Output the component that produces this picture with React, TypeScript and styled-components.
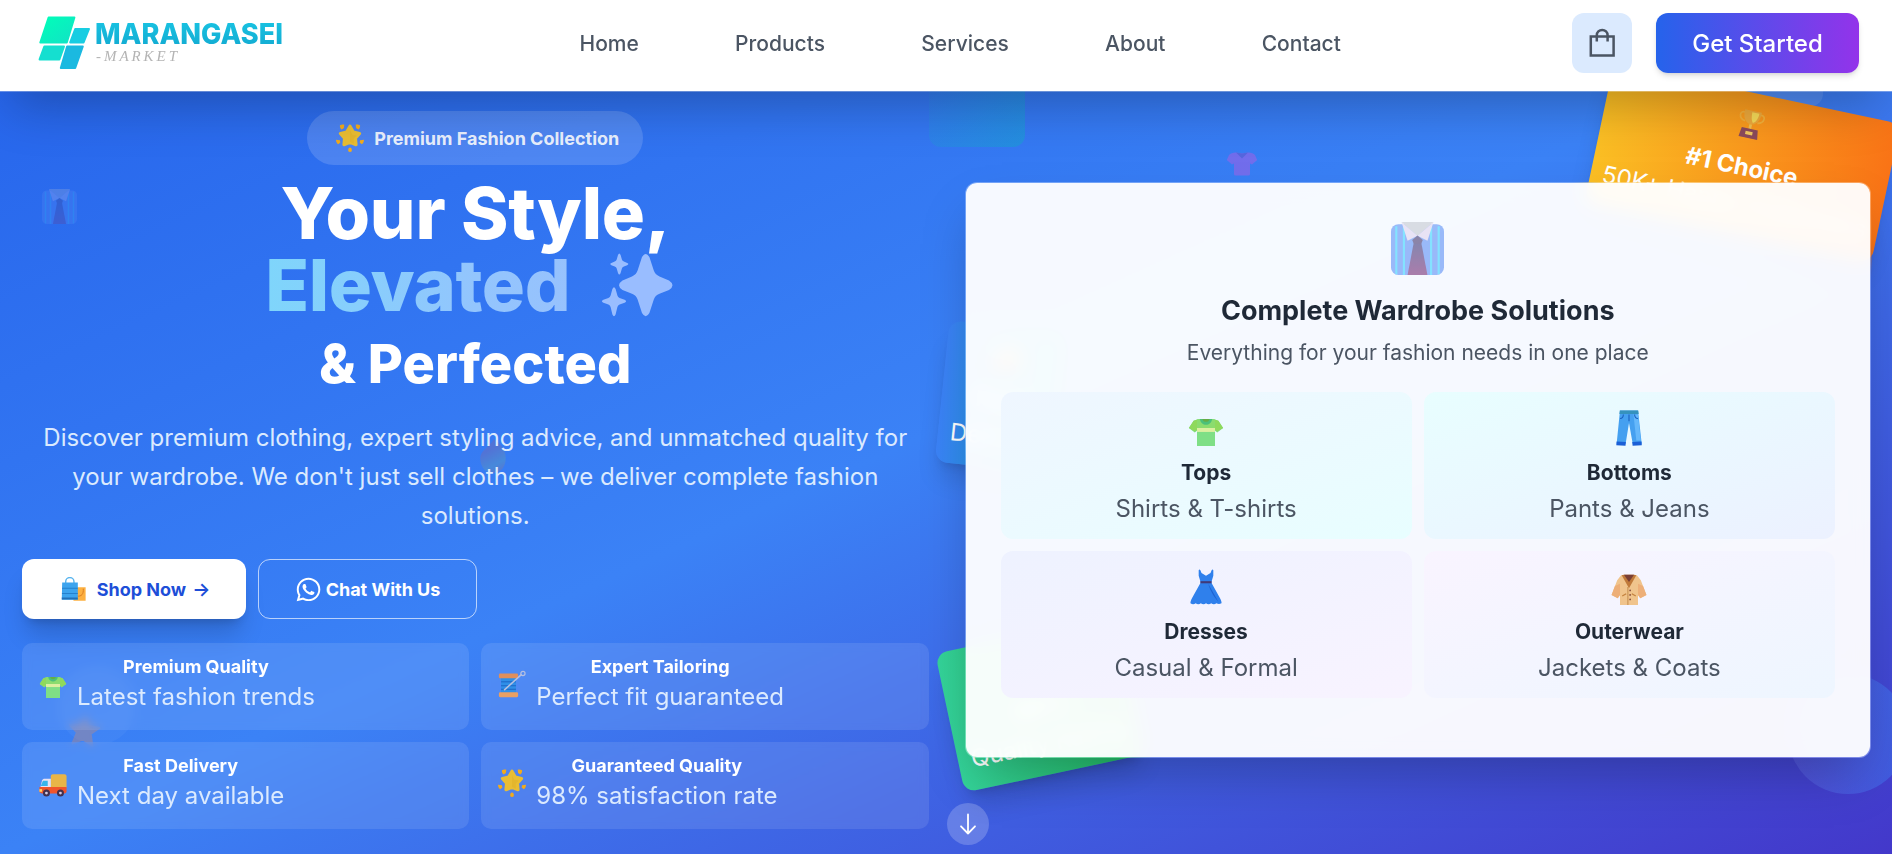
import React from 'react';
import styled, { createGlobalStyle, css } from 'styled-components';
import { FaWhatsapp } from 'react-icons/fa';

const GlobalStyle = createGlobalStyle`
  *, *::before, *::after { box-sizing: border-box; }
  body { margin: 0; overflow: hidden; }
  h1, h2, h3, h4, p { margin: 0; }
  button { font-family: inherit; border: 0; cursor: pointer; }
`;

/* ---------- page shell ---------- */

const Page = styled.div`
  position: relative;
  width: 100%;
  height: 854px;
  overflow: hidden;
  font-family: Inter, 'Liberation Sans', sans-serif;
  background: linear-gradient(to bottom right, #2563eb, #3b82f6, #4338ca);
`;

const Header = styled.header`
  position: relative;
  z-index: 5;
  height: 92px;
  padding: 13px 33px 0 38px;
  display: grid;
  grid-template-columns: 541.5px auto 1fr;
  align-items: start;
  background: #fff;
  background-clip: padding-box;
  border-bottom: 1px solid rgba(255, 255, 255, 0.3);
  box-shadow: 0 25px 50px -12px rgba(0, 0, 0, 0.25);
`;

const Nav = styled.nav`
  display: flex;
  align-items: center;
  gap: 96.3px;
  height: 60px;
`;

const NavLink = styled.a`
  font-size: 21px;
  font-weight: 500;
  color: #4b5563;
`;

const Actions = styled.div`
  display: flex;
  justify-content: flex-end;
  gap: 24px;
`;

const BagButton = styled.button`
  width: 60px;
  height: 60px;
  padding: 0;
  border-radius: 12px;
  background: #dbeafe;
  display: grid;
  place-items: center;
`;

const StartButton = styled.button`
  width: 203px;
  height: 60px;
  padding: 0;
  border-radius: 12px;
  color: #fff;
  font-size: 24px;
  font-weight: 500;
  background: linear-gradient(to right, #2563eb, #9333ea);
  box-shadow: 0 4px 6px -1px rgba(0, 0, 0, 0.12), 0 2px 4px -2px rgba(0, 0, 0, 0.12);
`;

/* ---------- hero, left column ---------- */

const Hero = styled.main`
  position: relative;
  z-index: 2;
  padding: 19px 21px 0 22px;
  display: grid;
  grid-template-columns: 1fr 1fr;
  gap: 36px;
  align-items: start;
`;

const Intro = styled.section`
  display: flex;
  flex-direction: column;
`;

const Badge = styled.div`
  align-self: center;
  width: 336px;
  height: 54px;
  padding-left: 29px;
  display: flex;
  align-items: center;
  gap: 10px;
  border-radius: 27px;
  background: rgba(255, 255, 255, 0.15);
  color: rgba(255, 255, 255, 0.9);
  font-size: 18px;
  font-weight: 700;
  white-space: nowrap;
`;

const Headline = styled.h1`
  margin-top: 12px;
  color: #fff;
  text-align: center;
  font-size: 72px;
  line-height: 72px;
  font-weight: 800;
  letter-spacing: -0.2px;
`;

const Accent = styled.span`
  display: flex;
  justify-content: center;
  align-items: center;
  height: 72px;
  padding-right: 12px;
  gap: 32px;
  letter-spacing: -0.4px;
  color: transparent;
  background: linear-gradient(to right, #67e8f9, #93c5fd, #a5b4fc);
  background-clip: text;
  -webkit-background-clip: text;
`;

const SubHeadline = styled.span`
  display: block;
  margin-top: 13px;
  font-size: 54px;
  line-height: 60px;
  letter-spacing: 0;
`;

const Lead = styled.p`
  margin: 24px 0;
  padding: 0 20px;
  color: #dbeafe;
  text-align: center;
  font-size: 24px;
  line-height: 39px;
`;

const Buttons = styled.div`
  display: flex;
  gap: 12px;
`;

const CtaButton = styled.button<{ $solid?: boolean }>`
  height: 60px;
  padding: 0;
  display: flex;
  align-items: center;
  justify-content: center;
  border-radius: 12px;
  font-size: 18px;
  font-weight: 700;
  ${({ $solid }) =>
    $solid
      ? css`
          width: 224px;
          padding-left: 3px;
          gap: 6px;
          color: #1d4ed8;
          background: #fff;
          box-shadow: 0 20px 25px -5px rgba(0, 0, 0, 0.16), 0 8px 10px -6px rgba(0, 0, 0, 0.16);
        `
      : css`
          width: 219px;
          gap: 4px;
          color: #fff;
          background: transparent;
          border: 1px solid rgba(255, 255, 255, 0.65);
        `}
`;

const ButtonLabel = styled.span`
  margin-left: 5px;
`;

const ButtonArrow = styled.span`
  font-size: 19px;
  font-weight: 600;
`;

const Features = styled.div`
  margin-top: 24px;
  display: grid;
  grid-template-columns: 1fr 1fr;
  gap: 12px;
`;

const Feature = styled.div`
  height: 87px;
  padding: 12px 17px;
  display: flex;
  align-items: flex-start;
  gap: 10px;
  border-radius: 10px;
  background: rgba(255, 255, 255, 0.1);
  backdrop-filter: blur(4px);
`;

const FeatureIcon = styled.span`
  height: 58px;
  display: flex;
  align-items: center;
`;

const FeatureText = styled.div`
  text-align: center;
`;

const FeatureTitle = styled.h4`
  color: #fff;
  font-size: 18px;
  line-height: 24px;
  font-weight: 700;
`;

const FeatureNote = styled.p`
  color: #dbeafe;
  font-size: 24px;
  line-height: 36px;
`;

/* ---------- hero, right column ---------- */

const Showcase = styled.section`
  height: 576px;
  margin-top: 71px;
  padding: 36px 35px 0;
  display: flex;
  flex-direction: column;
  align-items: center;
  border-radius: 12px;
  border: 1px solid rgba(255, 255, 255, 0.3);
  background: rgba(255, 255, 255, 0.955);
  background-clip: padding-box;
  backdrop-filter: blur(9px);
  box-shadow: 0 25px 50px -12px rgba(0, 0, 0, 0.25);
`;

const ShowcaseIcon = styled.div`
  height: 60px;
  padding-top: 3px;
  line-height: 0;
  opacity: 0.62;
`;

const ShowcaseTitle = styled.h2`
  margin-top: 14px;
  color: #1f2937;
  font-size: 27px;
  line-height: 36px;
  font-weight: 700;
`;

const ShowcaseNote = styled.p`
  margin: 9px 0 24px;
  color: #4b5563;
  font-size: 21px;
  line-height: 30px;
`;

const Tiles = styled.div`
  width: 100%;
  display: grid;
  grid-template-columns: 1fr 1fr;
  gap: 12px;
`;

const Tile = styled.div<{ $from: string; $to: string }>`
  height: 147px;
  padding-top: 18px;
  display: flex;
  flex-direction: column;
  align-items: center;
  border-radius: 12px;
  background: linear-gradient(to bottom right, ${(p) => p.$from}, ${(p) => p.$to});
`;

const TileTitle = styled.h3`
  margin-top: 11px;
  color: #1f2937;
  font-size: 21px;
  line-height: 32px;
  font-weight: 700;
`;

const TileNote = styled.p`
  color: #4b5563;
  font-size: 24px;
  line-height: 40px;
`;

/* ---------- floating decoration ---------- */

const Backdrop = styled.div`
  position: absolute;
  inset: 0;
  z-index: 1;
`;

const Floating = styled.div<{ $x: number; $y: number; $opacity?: number }>`
  position: absolute;
  left: ${(p) => p.$x}px;
  top: ${(p) => p.$y}px;
  opacity: ${(p) => p.$opacity ?? 1};
  line-height: 0;
`;

const Shape = styled(Floating)<{ $size: number; $radius: string; $fill: string }>`
  width: ${(p) => p.$size}px;
  height: ${(p) => p.$size}px;
  border-radius: ${(p) => p.$radius};
  background: ${(p) => p.$fill};
`;

const Sticker = styled.div<{ $x: number; $y: number; $w: number; $turn: number; $from: string; $to: string }>`
  position: absolute;
  left: ${(p) => p.$x}px;
  top: ${(p) => p.$y}px;
  width: ${(p) => p.$w}px;
  height: 142px;
  padding-top: 17px;
  display: flex;
  flex-direction: column;
  align-items: center;
  border-radius: 12px;
  color: #fff;
  white-space: nowrap;
  font-size: 24px;
  line-height: 36px;
  transform: rotate(${(p) => p.$turn}deg);
  background: linear-gradient(to right, ${(p) => p.$from}, ${(p) => p.$to});
  box-shadow: 0 20px 25px -5px rgba(0, 0, 0, 0.12), 0 8px 10px -6px rgba(0, 0, 0, 0.12);
`;

const StickerTitle = styled.strong`
  margin-top: 11px;
  font-weight: 700;
  line-height: 36px;
`;

const ScrollHint = styled.button`
  position: absolute;
  z-index: 3;
  left: 947px;
  top: 803px;
  width: 42px;
  height: 42px;
  padding: 0;
  border-radius: 50%;
  background: rgba(255, 255, 255, 0.2);
  display: grid;
  place-items: center;
`;

/* ---------- drawings ---------- */

type IconProps = { size?: number };

const Art = ({ size = 30, children }: IconProps & { children: React.ReactNode }) => (
  <svg width={size} height={size} viewBox="0 0 32 32" fill="none">
    {children}
  </svg>
);

const Logo = () => (
  <svg width="260" height="60" viewBox="38 13 260 60">
    <defs>
      <linearGradient id="lgA" x1="0" y1="0" x2="1" y2="1">
        <stop offset="0" stopColor="#00ffb8" />
        <stop offset="1" stopColor="#12e2c6" />
      </linearGradient>
      <linearGradient id="lgB" x1="0" y1="0" x2="0" y2="1">
        <stop offset="0" stopColor="#1ac6e4" />
        <stop offset="1" stopColor="#12a8d0" />
      </linearGradient>
    </defs>
    <g strokeWidth="2" strokeLinejoin="round">
      <path d="M48.6 17.5H74.4L66.8 42.5H40.3Z" fill="url(#lgA)" stroke="url(#lgA)" />
      <path d="M75.2 29H89L83.6 42.4H70.2Z" fill="#18cde2" stroke="#18cde2" />
      <path d="M44.4 46.4H64L59.4 59.4H39.6Z" fill="#15dfd0" stroke="#15dfd0" />
      <path d="M67.2 46.4H82.8L75.2 68H60.8Z" fill="#1bb9e0" stroke="#1bb9e0" />
    </g>
    <text x="95" y="43.6" textLength="188" lengthAdjust="spacingAndGlyphs" fontFamily="Inter" fontWeight="800" fontSize="28" fill="url(#lgB)">
      MARANGASEI
    </text>
    <text x="96" y="61" textLength="81" fontFamily="Liberation Serif" fontStyle="italic" fontSize="15" fill="#b4b4b4">
      -MARKET
    </text>
  </svg>
);

const Bag = () => (
  <svg width="30" height="30" viewBox="0 0 30 30" fill="none" stroke="#4b5563" strokeWidth="2.5">
    <path d="M3.8 8.500H26.600V27.500H3.800Z" />
    <path d="M9.800 13.500V7.300a5.400 5.400 0 0 1 10.800 0v6.200" />
  </svg>
);

const GlowStar = ({ size }: IconProps) => (
  <Art size={size}>
    <path d="M16 2.500L19.800 9.200 27 10.800 22.200 16.300 22.900 23.700 16 20.800 9.100 23.700 9.800 16.300 5 10.800 12.200 9.200Z" fill="#e9bd33" stroke="#e9bd33" strokeWidth="3.600" strokeLinejoin="round" />
    <path d="M16 7l2.600 5.200 5 1-3.600 4 .6 5.400-4.600-2z" fill="#d9a722" opacity=".3" />
    <g fill="#f2ab1c">
      <path d="M4.500 1.500C6 .3 8 .3 9.500 .800L9 4.500 6.500 6.300C5 5 4.300 3.500 4.500 1.500zM27.500 1.500C26 .3 24 .3 22.500 .8L23 4.500l2.500 1.800C27 5 27.700 3.500 27.500 1.500zM0 18l4.500.5.500 2.500-2.500 2.200C1 22 0 20.300 0 18zM32 18l-4.500.5-.5 2.500 2.500 2.200C31 22 32 20.300 32 18zM14 28.200l2-1.500 2 1.500v3c-1 1-3 1-4 0z" />
    </g>
  </Art>
);

const FadedStar = ({ size }: IconProps) => (
  <Art size={size}>
    <path d="M16 2.500L19.300 10 29 11 22 17 24.500 27.500 16 22.500 7 27 10 17 3 11 12.700 9.500Z" transform="rotate(6 16 16)" fill="#c58a78" stroke="#c58a78" strokeWidth="2" strokeLinejoin="round" />
  </Art>
);

const Tee = ({ size }: IconProps) => (
  <Art size={size}>
    <g transform="translate(0 3.500)">
      <path d="M9.500 4.500L5 6 .8 12.500 6 16.500l2-1.600V28.500H24V14.900l2 1.600 5.200-4L27 6l-4.500-1.500z" fill="#7fdf86" />
      <path d="M9.500 4.500L5 6 .8 12.500 6 15.500l2-1.500V4.900zM22.500 4.500L27 6l4.200 6.500L26 15.500 24 14V5z" fill="#8fd95c" />
      <path d="M8 4.800h16v8H8z" fill="#8bdc6e" />
      <path d="M8 12.500h16v3.500H8z" fill="#dcefa0" />
      <path d="M10.500 4.500c1 6.800 10 6.800 11 0z" fill="#4cc07a" />
      <path d="M12.800 4.500c.8 3.400 5.600 3.400 6.400 0z" fill="#66ad45" />
    </g>
  </Art>
);

const PinkTee = ({ size }: IconProps) => (
  <Art size={size}>
    <path d="M10 5.500Q5 5.500 3 8L.8 13 6 17.500l2-1V27q0 1.500 1.500 1.500h13Q24 28.500 24 27V16.500l2 1 5.200-4.500L29 8q-2-2.500-7-2.500l-6 1z" fill="#d852de" />
    <path d="M10 5.500l6 6 6-6-6 1z" fill="#8a3fb8" />
  </Art>
);

const Necktie = ({ size }: IconProps) => (
  <Art size={size}>
    <defs>
      <linearGradient id="tie" x1="0" y1="0" x2="0" y2="1">
        <stop offset="0" stopColor="#40407c" />
        <stop offset="1" stopColor="#7c3278" />
      </linearGradient>
    </defs>
    <rect x="0" y="1.300" width="32" height="30.700" rx="4.500" fill="#6193f5" />
    <path d="M3.200 2.500v29M7.800 3v29M24.200 3v29M28.800 2.500v29" stroke="#3fd4ff" strokeWidth="1.300" />
    <path d="M13.800 12h4.400L22 32H10z" fill="url(#tie)" />
    <path d="M6.300 0h19.400L16 8.500z" fill="#c6c9d2" />
    <path d="M6.300 0L10 11.300l6-3zM25.700 0L22 11.300l-6-3z" fill="#e0d4ee" />
    <path d="M12.800 10.800L16 8.200l3.200 2.600-1 2.400h-4.400z" fill="#4a3c72" />
  </Art>
);

const Jeans = ({ size }: IconProps) => (
  <Art size={size}>
    <path d="M8 .5h16l3.300 29.500h-8L16 11.500 13 30H5z" fill="#45a0f0" />
    <path d="M20 4l4 0 2.500 23h-4z" fill="#66b8fb" />
    <path d="M7.800 .5h16.400l.4 3H7.500z" fill="#3592bd" />
    <path d="M5 28l8.200.5-.3 3.300-8.200-.5zM18.900 28.500l8.200-.5.3 3.300-8.200.5z" fill="#1b5fd6" />
    <path d="M16 4v6M8 7.500c2 .2 3-1.500 3-3.500M24 7.500c-2 .2-3-1.500-3-3.500" stroke="#1c62c0" />
  </Art>
);

const Dress = ({ size }: IconProps) => (
  <Art size={size}>
    <path d="M9.500 1v5l1.800 6L4 25c-1.500 2.800-2 4-1.800 5.500 2 1.500 3.500.8 4.600 0 1.500 1.200 3.300 1.200 4.600 0 1.500 1.200 3.300 1.200 4.600 0 1.500 1.200 3.300 1.200 4.600 0 1.500 1.200 3.300 1.200 4.600 0 1.500.8 2.800 1 4.600 0C30 29 29.500 27.800 28 25l-7.300-13 1.800-6V1c-.3-.6-1.200-.6-1.500 0l-1 2.500L16 6l-4-2.500L11 1c-.3-.6-1.200-.6-1.500 0z" fill="#2f80ec" />
    <path d="M18 13l9 16c-3-3-7-9-9-16z" fill="#1f62d2" />
    <path d="M11 10.800h10v1.900H11z" fill="#403a7a" />
  </Art>
);

const Coat = ({ size }: IconProps) => (
  <Art size={size}>
    <g transform="translate(0 1)">
      <path d="M9 4.500L5.500 9 .5 22l5.500 3 2-3v9h16v-9l2 3 5.500-3-5-13L23 4.500z" fill="#f0c48c" />
      <path d="M8 12v10l-2 3-5.500-3 3-8zM24 12v10l2 3 5.500-3-3-8z" fill="#edaf78" />
      <path d="M9.500 4.500L16 16l6.500-11.500-2-.5h-9z" fill="#c07a3a" />
      <path d="M11.500 4h9L16 10.500z" fill="#7a3f35" />
      <path d="M15 15v16" stroke="#c99253" />
      <path d="M10 23l3.500-2M22 23l-3.500-2" stroke="#c4823e" strokeWidth="1.200" />
      <g fill="#8a4f3a"><circle cx="17" cy="18" r=".8" /><circle cx="17" cy="22" r=".8" /><circle cx="17" cy="26" r=".8" /></g>
    </g>
  </Art>
);

const Thread = ({ size }: IconProps) => (
  <Art size={size}>
    <rect x="3.500" y="8" width="17" height="18" fill="#2f8fe8" />
    <path d="M3.500 13.500h17M3.500 18h17M3.500 22h17" stroke="#1c60c0" />
    <rect x="1" y="4" width="22" height="5.500" rx="1.500" fill="#e08f5c" />
    <rect x="1" y="25.500" width="22" height="5.500" rx="1.500" fill="#e9a063" />
    <path d="M7 23L27 5" stroke="#b6c0e0" strokeWidth="1.600" />
    <circle cx="28.500" cy="4" r="2.400" stroke="#b6c0e0" strokeWidth="1.400" />
  </Art>
);

const Truck = ({ size }: IconProps) => (
  <Art size={size}>
    <g transform="translate(0 2.500)">
      <path d="M13.500 6c0-1.500 1-2.500 2.500-2.500H29c1.500 0 2.500 1 2.500 2.500v13h-18z" fill="#e8b548" />
      <path d="M3.500 10.500C4 9 5 8.500 6.500 8.500h7V19h-12z" fill="#e8e2f4" />
      <path d="M4.500 11h5.500v6H2z" fill="#38b6ec" />
      <path d="M.5 18h31v5c0 1.500-1 2.500-2.500 2.500H3.500C2 25.500.5 24.500.5 23z" fill="#f0552c" />
      <path d="M.5 20.500h3v3h-3z" fill="#ffd75c" />
      <circle cx="8.500" cy="25" r="4" fill="#42304f" /><circle cx="8.500" cy="25" r="1.600" fill="#d5cbe0" />
      <circle cx="24.500" cy="25" r="4" fill="#42304f" /><circle cx="24.500" cy="25" r="1.600" fill="#d5cbe0" />
    </g>
  </Art>
);

const Bags = ({ size }: IconProps) => (
  <Art size={size}>
    <path d="M15 13h16.500v17.500H16z" fill="#fdb040" />
    <path d="M28.500 15c.5 7-2 10-8 9.500" stroke="#d77a20" strokeWidth="1.200" />
    <path d="M6 9V6a5.300 5.300 0 0 1 10.600 0v3" stroke="#58b4ee" strokeWidth="1.800" />
    <path d="M1.500 7h20v22H1z" fill="#3da4ee" />
    <path d="M1.300 14.500h20.200M1.200 21h20.300" stroke="#2580cc" strokeWidth="1.300" />
    <path d="M1 27.500h20.500" stroke="#2170b8" strokeWidth="2.500" />
  </Art>
);

const Trophy = ({ size }: IconProps) => (
  <Art size={size}>
    <path d="M7 4C1 3 1 12 9 13.500M25 4c6-1 6 8-2 9.500" stroke="#f3b03a" strokeWidth="1.900" />
    <path d="M6.500 1h19c.5 9-3.500 15-9.500 15S6 10 6.500 1z" fill="#eda93c" />
    <path d="M15 2.500h8c0 6-2 10-5 11.500-2-2-3-6-3-11.500z" fill="#f6da58" />
    <path d="M14.500 16h3v5h-3z" fill="#f0c050" />
    <path d="M7 21h18l1.500 10.500h-21z" fill="#8b4a5c" />
    <path d="M12 24h8v3.800h-8z" fill="#f0c860" />
  </Art>
);

const Orb = ({ size }: IconProps) => (
  <Art size={size}>
    <defs>
      <linearGradient id="orb" x1="0.300" y1="0" x2="0.700" y2="1">
        <stop offset="0.300" stopColor="#8068a6" />
        <stop offset="0.750" stopColor="#62a0b4" />
        <stop offset="1" stopColor="#8a70a0" />
      </linearGradient>
    </defs>
    <path d="M17 0c5 4 11 9 11 18 0 8-5 14-12 14S4 26 4 18C4 11 12 8 17 0z" fill="url(#orb)" />
  </Art>
);

const Sparkles = () => (
  <svg width="71" height="64" viewBox="0 -0.600 71 64" overflow="visible" fill="#99bdff">
    <path d="M40 3.500Q43.700-2.500 47.400 3.500L51.800 17Q53 21 57.500 22.800L67 26.800Q74 31.500 67 36.300L57.500 40.200Q53 42 51.800 46L47.400 59.500Q43.700 66 40 59.500L35.600 46Q34.400 42 30 40.200L20.500 36.300Q13.500 31.500 20.500 26.800L30 22.800Q34.400 21 35.600 17Z" />
    <path d="M16 1.500q1.300-3 2.600 0l1.300 4.500q.4 1.500 2 2l3.300 1.300q2.300 1.200 0 2.400l-3.300 1.300q-1.600.5-2 2l-1.300 4.500q-1.300 3-2.600 0l-1.300-4.500q-.4-1.500-2-2l-3.300-1.300q-2.300-1.200 0-2.400l3.300-1.300q1.600-.5 2-2z" />
    <path d="M10.400 35.500q1.600-3.500 3.200 0l1.800 6.500q.5 1.800 2.200 2.500l5 1.700q3 1.500 0 3l-5 1.700q-1.700.7-2.200 2.500l-1.800 7.500q-1.600 3.500-3.200 0l-1.800-7.500q-.5-1.800-2.200-2.500l-5-1.700q-3-1.500 0-3l5-1.700q1.700-.7 2.200-2.500z" />
  </svg>
);

const ArrowDown = () => (
  <svg width="18" height="22" viewBox="0 0 18 22" fill="none" stroke="#fff" strokeWidth="1.800" strokeLinecap="round" strokeLinejoin="round">
    <path d="M9 1.500v19M2 13.300l7 7.200 7-7.200" />
  </svg>
);

/* ---------- content ---------- */

const links = ['Home', 'Products', 'Services', 'About', 'Contact'];

const features = [
  { icon: <Tee size={28} />, title: 'Premium Quality', note: 'Latest fashion trends' },
  { icon: <Thread size={28} />, title: 'Expert Tailoring', note: 'Perfect fit guaranteed' },
  { icon: <Truck size={28} />, title: 'Fast Delivery', note: 'Next day available' },
  { icon: <GlowStar size={28} />, title: 'Guaranteed Quality', note: '98% satisfaction rate' },
];

const tiles = [
  { icon: <Tee size={36} />, title: 'Tops', note: 'Shirts & T-shirts', from: '#eff6ff', to: '#e8feff' },
  { icon: <Jeans size={36} />, title: 'Bottoms', note: 'Pants & Jeans', from: '#e8feff', to: '#ecf1ff' },
  { icon: <Dress size={36} />, title: 'Dresses', note: 'Casual & Formal', from: '#eef2ff', to: '#f8f3ff' },
  { icon: <Coat size={36} />, title: 'Outerwear', note: 'Jackets & Coats', from: '#f9f4ff', to: '#eef6ff' },
];

export default function App() {
  return (
    <Page>
      <GlobalStyle />
      <Header>
        <Logo />
        <Nav>
          {links.map((l) => (
            <NavLink key={l}>{l}</NavLink>
          ))}
        </Nav>
        <Actions>
          <BagButton aria-label="Cart"><Bag /></BagButton>
          <StartButton>Get Started</StartButton>
        </Actions>
      </Header>

      <Backdrop>
        <Shape $x={929} $y={51} $size={96} $radius="12px" $fill="linear-gradient(to bottom right, rgba(99,102,241,.05), rgba(6,182,190,.36))" />
        <Shape $x={1727} $y={10} $size={96} $radius="12px" $fill="rgba(255,255,255,.1)" />
        <Shape $x={58} $y={667} $size={78} $radius="50%" $fill="rgba(255,255,255,.04)" />
        <Shape $x={1788} $y={674} $size={120} $radius="50%" $fill="linear-gradient(to right, rgba(129,140,248,.22), rgba(59,130,246,.45))" />
        <Floating $x={42} $y={189} $opacity={0.22}><Necktie size={35} /></Floating>
        <Floating $x={1226} $y={147} $opacity={0.36}><PinkTee size={32} /></Floating>
        <Floating $x={476} $y={439} $opacity={0.38}><Orb size={34} /></Floating>
        <Floating $x={66} $y={714} $opacity={0.38}><FadedStar size={36} /></Floating>

        <Sticker $x={1596} $y={92.4} $w={293} $turn={12} $from="#fbbf24" $to="#f97316">
          <Trophy size={29} />
          <StickerTitle>#1 Choice</StickerTitle>
          50K+ Happy Customers
        </Sticker>
        <Sticker $x={942} $y={326} $w={117} $turn={6} $from="#3b82f6" $to="#06b6d4">
          <Truck size={29} />
          <StickerTitle>Fast</StickerTitle>
          Delivery
        </Sticker>
        <Sticker $x={948} $y={633} $w={184} $turn={-12} $from="#34d399" $to="#22b860">
          <GlowStar size={29} />
          <StickerTitle>98%</StickerTitle>
          Quality Rating
        </Sticker>
      </Backdrop>

      <Hero>
        <Intro>
          <Badge><GlowStar size={28} />Premium Fashion Collection</Badge>
          <Headline>
            Your Style,
            <Accent>Elevated <Sparkles /></Accent>
            <SubHeadline>&amp; Perfected</SubHeadline>
          </Headline>
          <Lead>
            Discover premium clothing, expert styling advice, and unmatched quality for your wardrobe. We don't just sell clothes – we deliver complete fashion solutions.
          </Lead>
          <Buttons>
            <CtaButton $solid><Bags size={25} /><ButtonLabel>Shop Now</ButtonLabel><ButtonArrow>→</ButtonArrow></CtaButton>
            <CtaButton><FaWhatsapp size={27} />Chat With Us</CtaButton>
          </Buttons>
          <Features>
            {features.map((f) => (
              <Feature key={f.title}>
                <FeatureIcon>{f.icon}</FeatureIcon>
                <FeatureText>
                  <FeatureTitle>{f.title}</FeatureTitle>
                  <FeatureNote>{f.note}</FeatureNote>
                </FeatureText>
              </Feature>
            ))}
          </Features>
        </Intro>

        <Showcase>
          <ShowcaseIcon><Necktie size={53} /></ShowcaseIcon>
          <ShowcaseTitle>Complete Wardrobe Solutions</ShowcaseTitle>
          <ShowcaseNote>Everything for your fashion needs in one place</ShowcaseNote>
          <Tiles>
            {tiles.map((t) => (
              <Tile key={t.title} $from={t.from} $to={t.to}>
                {t.icon}
                <TileTitle>{t.title}</TileTitle>
                <TileNote>{t.note}</TileNote>
              </Tile>
            ))}
          </Tiles>
        </Showcase>
      </Hero>

      <ScrollHint aria-label="Scroll down"><ArrowDown /></ScrollHint>
    </Page>
  );
}
